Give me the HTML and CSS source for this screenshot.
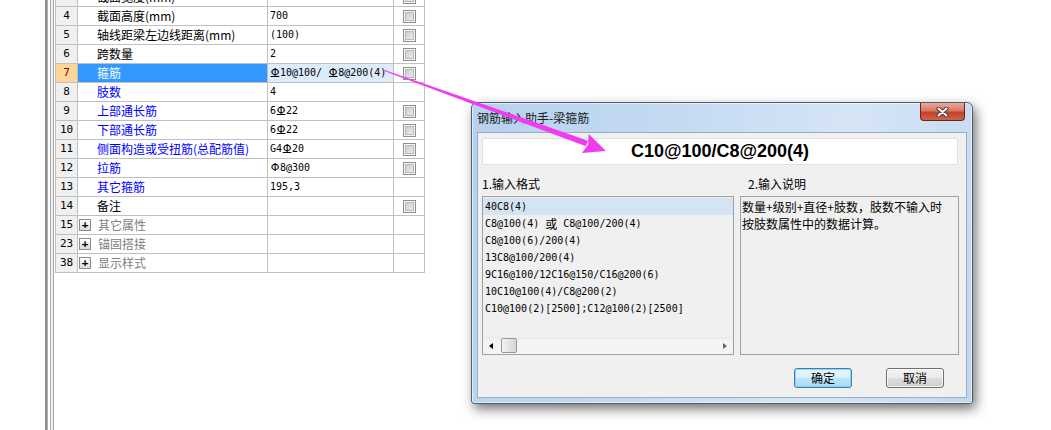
FILE: index.html
```html
<!DOCTYPE html>
<html lang="zh-CN">
<head>
  <meta charset="UTF-8" />
  <title>钢筋输入助手-梁箍筋</title>
  <link rel="stylesheet" href="styles.css">
</head>
<body>

<div class="desk">
  <div class="gutter"></div>
  <div class="splitter"></div>

  <!-- 属性表 -->
  <div class="props">
    <div class="row"><div class="no">3</div><div class="name">截面宽度(mm)</div><div class="val">300</div><div class="chk"><span class="box"></span></div></div>
    <div class="row"><div class="no">4</div><div class="name">截面高度(mm)</div><div class="val">700</div><div class="chk"><span class="box"></span></div></div>
    <div class="row"><div class="no">5</div><div class="name">轴线距梁左边线距离(mm)</div><div class="val">(100)</div><div class="chk"><span class="box"></span></div></div>
    <div class="row"><div class="no">6</div><div class="name">跨数量</div><div class="val">2</div><div class="chk"><span class="box"></span></div></div>
    <div class="row sel"><div class="no">7</div><div class="name">箍筋</div><div class="val"><span class="bar hrb">Φ</span>10@100/ <span class="bar hrb">Φ</span>8@200(4)</div><div class="chk"><span class="box"></span></div></div>
    <div class="row"><div class="no">8</div><div class="name link">肢数</div><div class="val">4</div><div class="chk"></div></div>
    <div class="row"><div class="no">9</div><div class="name link">上部通长筋</div><div class="val">6<span class="bar hrb">Φ</span>22</div><div class="chk"><span class="box"></span></div></div>
    <div class="row"><div class="no">10</div><div class="name link">下部通长筋</div><div class="val">6<span class="bar hrb">Φ</span>22</div><div class="chk"><span class="box"></span></div></div>
    <div class="row"><div class="no">11</div><div class="name link">侧面构造或受扭筋(总配筋值)</div><div class="val">G4<span class="bar hrb">Φ</span>20</div><div class="chk"><span class="box"></span></div></div>
    <div class="row"><div class="no">12</div><div class="name link">拉筋</div><div class="val"><span class="bar">Φ</span>8@300</div><div class="chk"><span class="box"></span></div></div>
    <div class="row"><div class="no">13</div><div class="name link">其它箍筋</div><div class="val">195,3</div><div class="chk"></div></div>
    <div class="row"><div class="no">14</div><div class="name">备注</div><div class="val"></div><div class="chk"><span class="box"></span></div></div>
    <div class="row"><div class="no">15</div><div class="name grp"><span class="plus">+</span>其它属性</div><div class="val"></div><div class="chk"></div></div>
    <div class="row"><div class="no">23</div><div class="name grp"><span class="plus">+</span>锚固搭接</div><div class="val"></div><div class="chk"></div></div>
    <div class="row"><div class="no">38</div><div class="name grp"><span class="plus">+</span>显示样式</div><div class="val"></div><div class="chk"></div></div>
  </div>
</div>

<!-- 钢筋输入助手 窗口 -->
<div class="dialog">
  <div class="titlebar">
    <span class="title">钢筋输入助手-梁箍筋</span>
    <span class="close">
      <svg width="13" height="10" viewBox="0 0 13 10">
        <path d="M2.5 1.5 L10.5 8.5 M10.5 1.5 L2.5 8.5" stroke="#3a3a3a" stroke-width="4" stroke-linecap="round"/>
        <path d="M2.5 1.5 L10.5 8.5 M10.5 1.5 L2.5 8.5" stroke="#fff" stroke-width="2" stroke-linecap="round"/>
      </svg>
    </span>
  </div>

  <div class="client">
    <div class="result">C10@100/C8@200(4)</div>

    <div class="cols">
      <div class="label">1.输入格式</div>
      <div class="label second">2.输入说明</div>

      <div class="listbox">
        <div class="items">
          <div class="item active">40C8(4)</div>
          <div class="item">C8@100(4) <span class="cjk">或</span> C8@100/200(4)</div>
          <div class="item">C8@100(6)/200(4)</div>
          <div class="item">13C8@100/200(4)</div>
          <div class="item">9C16@100/12C16@150/C16@200(6)</div>
          <div class="item">10C10@100(4)/C8@200(2)</div>
          <div class="item">C10@100(2)[2500];C12@100(2)[2500]</div>
        </div>
        <div class="hscroll">
          <span class="arr left"></span>
          <span class="thumb"></span>
          <span class="track"></span>
          <span class="arr right"></span>
        </div>
      </div>

      <div class="memo">数量+级别+直径+肢数，肢数不输入时<br>按肢数属性中的数据计算。</div>
    </div>

    <div class="actions">
      <button class="btn default">确定</button>
      <button class="btn">取消</button>
    </div>
  </div>
</div>

<svg class="arrow" width="1051" height="430" viewBox="0 0 1051 430">
  <polygon fill="#f03cf0" points="382.8,70.6 383.2,69.4 588,140.7 586,146.3"/>
  <polygon fill="#f03cf0" points="606,151 588.7,134.1 588.1,144.5 581.9,152.9"/>
</svg>

</body>
</html>
```

FILE: styles.css
```css
* {
  box-sizing: border-box;
}

body {
  margin: 0;
  width: 1051px;
  height: 430px;
  overflow: hidden;
  position: relative;
  background: #fff;
  font-family: "Noto Sans CJK SC", sans-serif;
  font-size: 12px;
  color: #000;
}

/* 左侧属性表 */
.desk {
  display: flex;
  height: 430px;
}

.gutter {
  width: 45px;
}

.splitter {
  width: 10px;
  background: linear-gradient(to right,
    #8c8c8c 0 2px, #b4b4b4 2px 3px, #fff 3px 5px,
    #b0b0b0 5px 6px, #f0f0f0 6px 8px, #a8a8a8 8px 9px, #fff 9px 10px);
}

.props {
  align-self: flex-start;
  margin-top: -12px;
  width: 370px;
  border-left: 1px solid #c0c0c0;
}

.row {
  display: grid;
  grid-template-columns: 22px 190px 126px 31px;
  height: 19px;
}

.row > div {
  border-right: 1px solid #c0c0c0;
  border-bottom: 1px solid #c0c0c0;
  line-height: 18px;
  white-space: pre;
  overflow: hidden;
}

.no {
  background: #f0f0f0;
  text-align: center;
  font: 11px/18px "DejaVu Sans Mono", monospace;
}

.name {
  padding-left: 19px;
}

.name.link {
  color: #0000ff;
}

.name.grp {
  display: flex;
  align-items: center;
  padding-left: 1px;
  color: #808080;
}

.plus {
  width: 12px;
  height: 12px;
  margin-right: 7px;
  border: 1px solid #8c8c8c;
  background: linear-gradient(#fff, #dcdcdc);
  color: #000;
  font: bold 11px/9px "DejaVu Sans Mono", monospace;
  text-align: center;
}

.val {
  padding-left: 2px;
  font: 10px/18px "DejaVu Sans Mono", monospace;
}

.bar {
  display: inline-block;
  width: 10px;
  text-align: center;
  font: 11px/18px "DejaVu Sans", sans-serif;
}

.bar.hrb {
  text-decoration: underline;
  text-underline-offset: 0;
}

.chk {
  display: flex;
  align-items: center;
  padding-left: 9px;
}

.box {
  width: 13px;
  height: 13px;
  border: 1px solid #8e8f8f;
  background: linear-gradient(135deg, #c4c6c8, #f2f2f2);
  box-shadow: inset 0 0 0 1px #f6f6f6, inset 0 0 0 2px #b8babc;
}

.row.sel .no {
  background: #ffd699;
  color: #800000;
}

.row.sel .name {
  background: #3399ff;
  color: #fff;
}

.row.sel .val {
  background: #dcecfc;
}

/* 窗口 */
.dialog {
  position: absolute;
  left: 471px;
  top: 102px;
  width: 502px;
  height: 302px;
  border: 1px solid #4d5d6e;
  border-radius: 6px 6px 3px 3px;
  background: linear-gradient(100deg, #b7d1ee 0%, #c6dbf2 40%, #d6e5f6 70%, #c2d8f0 100%);
  box-shadow: inset 0 0 0 1px rgba(255,255,255,0.55), 3px 5px 12px rgba(0,0,0,0.55);
  display: flex;
  flex-direction: column;
}

.titlebar {
  height: 29px;
  position: relative;
  display: flex;
  align-items: center;
  padding-left: 5px;
}

.title {
  font-size: 12px;
  color: #1a1a1a;
}

.close {
  position: absolute;
  right: 7px;
  top: 0;
  width: 45px;
  height: 18px;
  border: 1px solid #6b2418;
  border-top: none;
  border-radius: 0 0 4px 4px;
  background: linear-gradient(#e9a99a 0%, #d97863 45%, #c5432b 55%, #d0624a 100%);
  display: flex;
  align-items: center;
  justify-content: center;
}

.client {
  flex: 1;
  margin: 0 5px 5px 5px;
  border: 1px solid #98aec6;
  background: #f0f0f0;
  padding: 5px 0 0 4px;
}

.result {
  width: 476px;
  height: 27px;
  border: 1px solid #e0e0e0;
  background: #fff;
  text-align: center;
  font: bold 18px/25px "Liberation Sans", sans-serif;
}

.cols {
  display: grid;
  grid-template-columns: 252px 219px;
  grid-template-rows: 16px 159px;
  column-gap: 6px;
  row-gap: 4px;
  margin-top: 11px;
}

.label {
  line-height: 16px;
}

.label.second {
  padding-left: 8px;
}

.listbox {
  border: 1px solid #a0a0a0;
  display: flex;
  flex-direction: column;
}

.items {
  flex: 1;
  padding-top: 1px;
}

.item {
  height: 17px;
  overflow: hidden;
  padding-left: 2px;
  white-space: pre;
  font: 10px/17px "DejaVu Sans Mono", monospace;
}

.item.active {
  background: #d5e4f2;
}

.cjk {
  vertical-align: top;
  font: 12px/17px "Noto Sans CJK SC", sans-serif;
}

.hscroll {
  height: 17px;
  display: flex;
  align-items: center;
  background: linear-gradient(#e8e8e8, #f4f4f4 20%, #f4f4f4);
}

.arr {
  width: 0;
  height: 0;
  border-top: 3px solid transparent;
  border-bottom: 3px solid transparent;
}

.arr.left {
  margin: 0 8px 0 6px;
  border-right: 4px solid #000;
}

.arr.right {
  margin: 0 6px 0 8px;
  border-left: 4px solid #666;
}

.thumb {
  width: 16px;
  height: 15px;
  border: 1px solid #979797;
  border-radius: 2px;
  background: linear-gradient(to right, #f4f4f4, #e2e2e2 50%, #d6d6d6);
}

.track {
  flex: 1;
}

.memo {
  border: 1px solid #a0a0a0;
  padding: 1px 0 0 1px;
  line-height: 17px;
}

.actions {
  display: flex;
  justify-content: flex-end;
  gap: 34px;
  margin-top: 13px;
  padding-right: 22px;
}

.btn {
  width: 58px;
  height: 20px;
  padding: 0;
  border: 1px solid #707070;
  border-radius: 3px;
  background: linear-gradient(#f2f2f2 0%, #ebebeb 50%, #dddddd 51%, #cfcfcf 100%);
  box-shadow: inset 0 0 0 1px rgba(255,255,255,0.7);
  font: 12px/18px "Noto Sans CJK SC", sans-serif;
  color: #000;
}

.btn.default {
  border-color: #3c7fb1;
  background: linear-gradient(#eaf6fd 0%, #d9f0fc 50%, #bee6fd 51%, #a7d9f5 100%);
  box-shadow: inset 0 0 0 1px #8fd3f7;
}

/* 指示箭头 */
.arrow {
  position: absolute;
  left: 0;
  top: 0;
  pointer-events: none;
}
```
